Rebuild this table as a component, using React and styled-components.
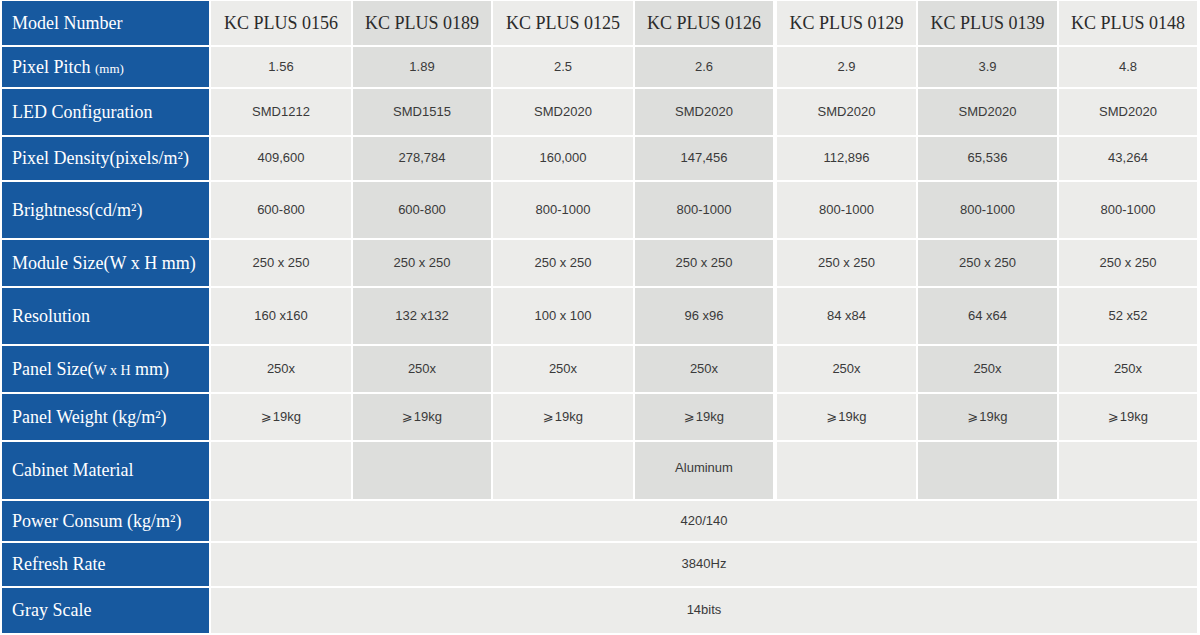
import React from 'react'
import styled, { createGlobalStyle } from 'styled-components'

const GlobalStyle = createGlobalStyle`
  html, body {
    margin: 0;
    padding: 0;
    background: #fff;
  }
`

const Table = styled.div`
  display: grid;
  grid-template-columns: 207px 140px 138px 140px 138px 141px 139px 138px;
  grid-template-rows: 44px 40px 46px 43px 56px 46px 56px 46px 46px 57px 40px 43px 45px;
  gap: 2px;
  padding: 1px 2px;
  width: 1200px;
  box-sizing: border-box;
`

const Label = styled.div`
  background: #17599f;
  color: #fff;
  font-family: "Liberation Serif", "Times New Roman", serif;
  font-size: 18px;
  display: flex;
  align-items: center;
  padding-left: 10px;
  white-space: nowrap;
`

const Small = styled.span`
  font-size: ${props => props.size || 13}px;
`

const Cell = styled.div`
  background: ${props => props.$dark ? '#dddedc' : '#ececea'};
  margin-left: ${props => props.$shift ? '2px' : '0'};
  display: flex;
  align-items: center;
  justify-content: center;
  color: #3a3a3a;
  font-family: "Liberation Sans", Arial, sans-serif;
  font-size: 13px;
  padding-bottom: ${props => props.$lift ? '6px' : '2px'};
`

const ModelCell = styled(Cell)`
  font-family: "Liberation Serif", "Times New Roman", serif;
  font-size: 18px;
  color: #2b2b2b;
  padding-bottom: 0;
`

const SpanCell = styled(Cell)`
  grid-column: 2 / -1;
  background: #ececea;
`

const GE = styled.span`
  font-family: "DejaVu Sans", sans-serif;
  font-size: 13px;
  margin-right: 1px;
`

const models = ['KC PLUS 0156', 'KC PLUS 0189', 'KC PLUS 0125', 'KC PLUS 0126', 'KC PLUS 0129', 'KC PLUS 0139', 'KC PLUS 0148']

const weight = <span><GE>⩾</GE>19kg</span>

const rows = [
  { label: <span>Pixel Pitch <Small>(mm)</Small></span>, values: ['1.56', '1.89', '2.5', '2.6', '2.9', '3.9', '4.8'] },
  { label: 'LED Configuration', values: ['SMD1212', 'SMD1515', 'SMD2020', 'SMD2020', 'SMD2020', 'SMD2020', 'SMD2020'] },
  { label: 'Pixel Density(pixels/m²)', values: ['409,600', '278,784', '160,000', '147,456', '112,896', '65,536', '43,264'] },
  { label: 'Brightness(cd/m²)', values: ['600-800', '600-800', '800-1000', '800-1000', '800-1000', '800-1000', '800-1000'] },
  { label: 'Module Size(W x H mm)', values: Array(7).fill('250 x 250') },
  { label: 'Resolution', values: ['160 x160', '132 x132', '100 x 100', '96 x96', '84 x84', '64 x64', '52 x52'] },
  { label: <span>Panel Size(<Small size={14}>W x H</Small> mm)</span>, values: Array(7).fill('250x') },
  { label: 'Panel Weight (kg/m²)', values: Array(7).fill(weight) },
  { label: 'Cabinet Material', values: ['', '', '', 'Aluminum', '', '', ''], lift: true },
]

const merged = [
  ['Power Consum (kg/m²)', '420/140'],
  ['Refresh Rate', '3840Hz'],
  ['Gray Scale', '14bits'],
]

const App = () => {
  return (
    <>
      <GlobalStyle />
      <Table>
        <Label>Model Number</Label>
        {models.map((m, i) => (
          <ModelCell key={m} $dark={i % 2 === 1} $shift={i === 4}>{m}</ModelCell>
        ))}
        {rows.map((row, r) => (
          <React.Fragment key={r}>
            <Label>{row.label}</Label>
            {row.values.map((v, i) => (
              <Cell key={i} $dark={i % 2 === 1} $shift={i === 4} $lift={row.lift}>{v}</Cell>
            ))}
          </React.Fragment>
        ))}
        {merged.map(([label, value]) => (
          <React.Fragment key={label}>
            <Label>{label}</Label>
            <SpanCell>{value}</SpanCell>
          </React.Fragment>
        ))}
      </Table>
    </>
  )
}

export default App
